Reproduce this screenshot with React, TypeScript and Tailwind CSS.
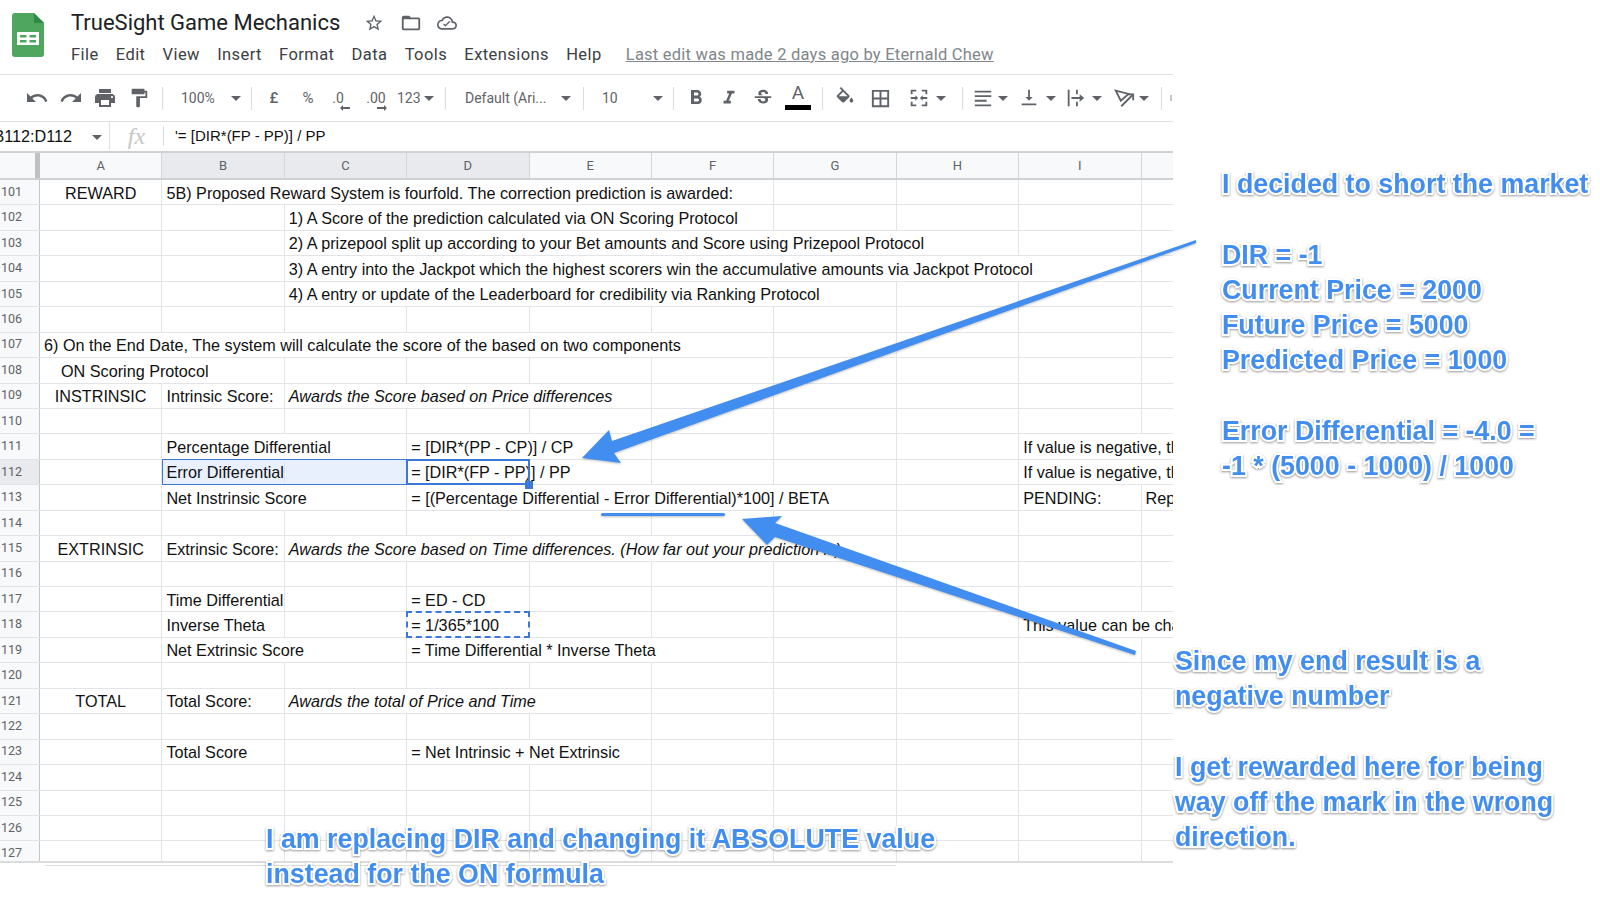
import React from "react";

const COL = 122.4;

type Cell = { col: number; span?: number; text: string; center?: boolean; italic?: boolean; pad?: string };

const rows: { n: number; cells: Cell[] }[] = [
  { n: 101, cells: [{ col: 0, text: "REWARD", center: true }, { col: 1, span: 5, text: "5B) Proposed Reward System is fourfold. The correction prediction is awarded:" }] },
  { n: 102, cells: [{ col: 2, span: 4, text: "1) A Score of the prediction calculated via ON Scoring Protocol" }] },
  { n: 103, cells: [{ col: 2, span: 6, text: "2) A prizepool split up according to your Bet amounts and Score using Prizepool Protocol" }] },
  { n: 104, cells: [{ col: 2, span: 7, text: "3) A entry into the Jackpot which the highest scorers win the accumulative amounts via Jackpot Protocol" }] },
  { n: 105, cells: [{ col: 2, span: 5, text: "4) A entry or update of the Leaderboard for credibility via Ranking Protocol" }] },
  { n: 106, cells: [] },
  { n: 107, cells: [{ col: 0, span: 6, text: "6) On the End Date, The system will calculate the score of the based on two components" }] },
  { n: 108, cells: [{ col: 0, span: 2, text: "ON Scoring Protocol", pad: "pl-[21px]" }] },
  { n: 109, cells: [{ col: 0, text: "INSTRINSIC", center: true }, { col: 1, text: "Intrinsic Score:" }, { col: 2, span: 3, text: "Awards the Score based on Price differences", italic: true }] },
  { n: 110, cells: [] },
  { n: 111, cells: [{ col: 1, span: 2, text: "Percentage Differential" }, { col: 3, span: 2, text: "= [DIR*(PP - CP)] / CP" }, { col: 8, span: 2, text: "If value is negative, then the" }] },
  { n: 112, cells: [{ col: 1, text: "Error Differential" }, { col: 2, text: "" }, { col: 3, span: 2, text: "= [DIR*(FP - PP)] / PP" }, { col: 8, span: 2, text: "If value is negative, then the" }] },
  { n: 113, cells: [{ col: 1, span: 2, text: "Net Instrinsic Score" }, { col: 3, span: 4, text: "= [(Percentage Differential - Error Differential)*100] / BETA" }, { col: 8, text: "PENDING:" }, { col: 9, text: "Replace" }] },
  { n: 114, cells: [] },
  { n: 115, cells: [{ col: 0, text: "EXTRINSIC", center: true }, { col: 1, text: "Extrinsic Score:" }, { col: 2, span: 5, text: "Awards the Score based on Time differences. (How far out your prediction is)", italic: true }] },
  { n: 116, cells: [] },
  { n: 117, cells: [{ col: 1, text: "Time Differential" }, { col: 3, text: "= ED - CD" }] },
  { n: 118, cells: [{ col: 1, text: "Inverse Theta" }, { col: 3, text: "= 1/365*100" }, { col: 8, span: 2, text: "This value can be changed" }] },
  { n: 119, cells: [{ col: 1, span: 2, text: "Net Extrinsic Score" }, { col: 3, span: 3, text: "= Time Differential * Inverse Theta" }] },
  { n: 120, cells: [] },
  { n: 121, cells: [{ col: 0, text: "TOTAL", center: true }, { col: 1, text: "Total Score:" }, { col: 2, span: 3, text: "Awards the total of Price and Time", italic: true }] },
  { n: 122, cells: [] },
  { n: 123, cells: [{ col: 1, text: "Total Score" }, { col: 3, span: 2, text: "= Net Intrinsic + Net Extrinsic" }] },
  { n: 124, cells: [] },
  { n: 125, cells: [] },
  { n: 126, cells: [] },
  { n: 127, cells: [] },
];

const Mi = ({ d, className = "" }: { d: string; className?: string }) => (
  <svg viewBox="0 0 24 24" className={`fill-[#5f6368] ${className}`}>
    <path d={d} />
  </svg>
);

const Caret = () => (
  <svg viewBox="0 0 10 5" className="w-[10px] h-[5px] fill-[#5f6368] shrink-0">
    <path d="M0 0h10L5 5z" />
  </svg>
);

const Sep = () => (
  <div className="w-3 flex justify-center shrink-0">
    <div className="w-px h-[23px] bg-[#dadce0]" />
  </div>
);

const Slot = ({ w, children }: { w: string; children: React.ReactNode }) => (
  <div className={`${w} h-full flex items-center justify-center shrink-0`}>{children}</div>
);

const icons = {
  undo: "M12.5 8c-2.65 0-5.05.99-6.9 2.6L2 7v9h9l-3.62-3.62c1.39-1.16 3.16-1.88 5.12-1.88 3.54 0 6.55 2.31 7.6 5.5l2.37-.78C21.08 11.03 17.15 8 12.5 8z",
  redo: "M18.4 10.6C16.55 8.99 14.15 8 11.5 8c-4.65 0-8.58 3.03-9.96 7.22L3.9 16c1.05-3.19 4.05-5.5 7.6-5.5 1.95 0 3.73.72 5.12 1.88L13 16h9V7l-3.6 3.6z",
  print: "M19 8H5c-1.66 0-3 1.34-3 3v6h4v4h12v-4h4v-6c0-1.66-1.34-3-3-3zm-3 11H8v-5h8v5zm3-7c-.55 0-1-.45-1-1s.45-1 1-1 1 .45 1 1-.45 1-1 1zm-1-9H6v4h12V3z",
  paint: "M18 4V3c0-.55-.45-1-1-1H5c-.55 0-1 .45-1 1v4c0 .55.45 1 1 1h12c.55 0 1-.45 1-1V6h1v4H9v11c0 .55.45 1 1 1h2c.55 0 1-.45 1-1v-9h8V4h-3z",
  bold: "M15.6 10.79c.97-.67 1.65-1.77 1.65-2.79 0-2.26-1.75-4-4-4H7v14h7.04c2.09 0 3.71-1.7 3.71-3.79 0-1.52-.86-2.82-2.15-3.42zM10 6.5h3c.83 0 1.5.67 1.5 1.5s-.67 1.5-1.5 1.5h-3v-3zm3.5 9H10v-3h3.5c.83 0 1.5.67 1.5 1.5s-.67 1.5-1.5 1.5z",
  italic: "M10 4v3h2.21l-3.42 8H6v3h8v-3h-2.21l3.42-8H18V4z",
  strike: "M6.85 7.08C6.85 4.37 9.45 3 12.24 3c1.64 0 3 .49 3.9 1.28.77.65 1.46 1.73 1.46 3.24h-3.01c0-.31-.05-.59-.15-.85-.29-.86-1.2-1.28-2.25-1.28-1.86 0-2.34 1.02-2.34 1.7 0 .48.25.88.74 1.21.38.25.77.48 1.41.7H7.39c-.21-.34-.54-.89-.54-1.92zM21 12v-2H3v2h9.62c1.15.45 1.96.75 1.96 1.97 0 1-.81 1.67-2.28 1.67-1.54 0-2.93-.54-2.93-2.51H6.4c0 .55.08 1.13.24 1.58.81 2.29 3.29 3.3 5.67 3.3 2.27 0 5.3-.89 5.3-4.05 0-.3-.01-1.16-.48-1.94H21V12z",
  fill: "M16.56 8.94L7.62 0 6.21 1.41l2.38 2.38-5.15 5.15c-.59.59-.59 1.54 0 2.12l5.5 5.5c.29.29.68.44 1.06.44s.77-.15 1.06-.44l5.5-5.5c.59-.58.59-1.53 0-2.12zM5.21 10L10 5.21 14.79 10H5.21zM19 11.5s-2 2.17-2 3.5c0 1.1.9 2 2 2s2-.9 2-2c0-1.33-2-3.5-2-3.5z",
  borders: "M3 3v18h18V3H3zm8 16H5v-6h6v6zm0-8H5V5h6v6zm8 8h-6v-6h6v6zm0-8h-6V5h6v6z",
  merge: "M3 3h6v2H5v3H3zM15 3h6v5h-2V5h-4zM3 16h2v3h4v2H3zM19 16h2v5h-6v-2h4zM3 11h5V9l3 3-3 3v-2H3zM21 13h-5v2l-3-3 3-3v2h5z",
  align: "M3 4h18v2H3zM3 9h18v2H3zM3 14h13v2H3zM3 19h18v2H3z",
  valign: "M16 11h-3V3h-2v8H8l4 4 4-4zM4 18v2h16v-2H4z",
  wrap: "M3 3h2v18H3zM12 3h2v5h-2zM12 16h2v5h-2zM7 11h9V8l5 4-5 4v-3H7z",
  star: "M22 9.24l-7.19-.62L12 2 9.19 8.63 2 9.24l5.46 4.73L5.82 21 12 17.27 18.18 21l-1.63-7.03L22 9.24zM12 15.4l-3.76 2.27 1-4.28-3.32-2.88 4.38-.38L12 6.1l1.71 4.04 4.38.38-3.32 2.88 1 4.28L12 15.4z",
  folder: "M20 6h-8l-2-2H4c-1.1 0-1.99.9-1.99 2L2 18c0 1.1.9 2 2 2h16c1.1 0 2-.9 2-2V8c0-1.1-.9-2-2-2zm0 12H4V8h16v10z",
  cloud: "M19.35 10.04C18.67 6.59 15.64 4 12 4 9.11 4 6.6 5.64 5.35 8.04 2.34 8.36 0 10.91 0 14c0 3.31 2.69 6 6 6h13c2.76 0 5-2.24 5-5 0-2.64-2.05-4.78-4.65-4.96zM19 18H6c-2.21 0-4-1.79-4-4s1.79-4 4-4h.71C7.37 7.69 9.48 6 12 6c3.04 0 5.5 2.46 5.5 5.5v.5H19c1.66 0 3 1.34 3 3s-1.34 3-3 3zM10 14.200 8.300 12.500 7.200 13.600 10 16.400 16 10.400 14.900 9.300z",
};

const RotateIcon = () => (
  <svg viewBox="0 0 24 24" className="w-[22px] h-[22px] fill-none stroke-[#5f6368] stroke-2">
    <path d="M3 4l14 3.500L8.500 15z" />
    <path d="M9 21L21 9" />
    <path d="M15.500 8H22v6.500" />
  </svg>
);

const SheetsLogo = () => (
  <svg viewBox="0 0 32 44" className="w-8 h-11">
    <path d="M3 0h19l10 10v31a3 3 0 0 1-3 3H3a3 3 0 0 1-3-3V3a3 3 0 0 1 3-3z" fill="#4fa75f" />
    <path d="M22 0l10 10H22z" fill="#2f8a47" />
    <path d="M5 19h22v13H5z" fill="#fff" />
    <path d="M8 22h6.500v2.500H8zM17.500 22H24v2.500h-6.500zM8 27h6.500v2.500H8zM17.500 27H24v2.500h-6.500z" fill="#4fa75f" />
  </svg>
);

const TopBar = () => (
  <div className="h-[75px] flex border-b border-[#e0e0e0] font-['Roboto',sans-serif] shrink-0">
    <div className="w-[71px] pl-3 pt-[13px] shrink-0">
      <SheetsLogo />
    </div>
    <div className="flex flex-col">
      <div className="h-[24px] mt-[11px] flex items-center">
        <span className="text-[22px] text-[#202124] leading-none">TrueSight Game Mechanics</span>
        <Mi d={icons.star} className="w-[20px] h-[20px] ml-[24px]" />
        <Mi d={icons.folder} className="w-[22px] h-[22px] ml-[16px]" />
        <Mi d={icons.cloud} className="w-[20px] h-[20px] ml-[15px]" />
      </div>
      <div className="mt-[9px] flex items-center gap-[17.200px] text-[16.500px] tracking-[0.42px] text-[#3c4043] leading-[22px]">
        <span>File</span>
        <span>Edit</span>
        <span>View</span>
        <span>Insert</span>
        <span>Format</span>
        <span>Data</span>
        <span>Tools</span>
        <span>Extensions</span>
        <span>Help</span>
        <span className="ml-[7px] underline tracking-[0.23px] text-[#80868b]">Last edit was made 2 days ago by Eternald Chew</span>
      </div>
    </div>
  </div>
);

const Toolbar = () => (
  <div className="h-[47px] pl-5 flex items-center border-b border-[#e0e0e0] text-[14px] text-[#5f6368] font-['Roboto',sans-serif] shrink-0">
    <Slot w="w-[34px]"><Mi d={icons.undo} className="w-[24px] h-[24px]" /></Slot>
    <Slot w="w-[34px]"><Mi d={icons.redo} className="w-[24px] h-[24px]" /></Slot>
    <Slot w="w-[34px]"><Mi d={icons.print} className="w-[24px] h-[24px]" /></Slot>
    <Slot w="w-[34px]"><Mi d={icons.paint} className="w-[22px] h-[22px]" /></Slot>
    <Sep />
    <div className="w-[77px] pl-[13px] pr-[4px] flex items-center justify-between shrink-0">
      <span>100%</span>
      <Caret />
    </div>
    <Sep />
    <Slot w="w-[34px]"><span className="text-[15px] font-medium">£</span></Slot>
    <Slot w="w-[34px]"><span className="text-[15px]">%</span></Slot>
    <Slot w="w-[34px]">
      <span className="relative text-[14px] mr-[8px]">.0
        <svg viewBox="0 0 10 6" className="absolute left-[8px] top-[17px] w-[10px] h-[6px] fill-[#5f6368]"><path d="M0 3l3-3v2h7v2H3v2z" /></svg>
      </span>
    </Slot>
    <Slot w="w-[34px]">
      <span className="relative text-[14px]">.00
        <svg viewBox="0 0 10 6" className="absolute left-[11px] top-[17px] w-[10px] h-[6px] fill-[#5f6368]"><path d="M10 3L7 0v2H0v2h7v2z" /></svg>
      </span>
    </Slot>
    <div className="w-[46px] pl-1 flex items-center gap-[3px] shrink-0">
      <span>123</span>
      <Caret />
    </div>
    <Sep />
    <div className="w-[126px] pl-[14px] pr-[6px] flex items-center justify-between shrink-0">
      <span>Default (Ari...</span>
      <Caret />
    </div>
    <Sep />
    <div className="w-[78px] pl-[13px] pr-[4px] flex items-center justify-between shrink-0">
      <span>10</span>
      <Caret />
    </div>
    <Sep />
    <Slot w="w-[33px]"><Mi d={icons.bold} className="w-[24px] h-[24px]" /></Slot>
    <Slot w="w-[34px]"><Mi d={icons.italic} className="w-[22px] h-[22px]" /></Slot>
    <Slot w="w-[34px]"><Mi d={icons.strike} className="w-[22px] h-[22px]" /></Slot>
    <div className="w-[36px] flex flex-col items-center shrink-0">
      <span className="text-[19px] leading-[20px] mt-[-3px]">A</span>
      <div className="w-[26px] h-[5px] bg-black mt-[2px]" />
    </div>
    <Sep />
    <Slot w="w-[34px]"><Mi d={icons.fill} className="w-[22px] h-[22px]" /></Slot>
    <Slot w="w-[37px]"><Mi d={icons.borders} className="w-[23px] h-[23px]" /></Slot>
    <div className="w-[57px] pl-[9px] flex items-center gap-[6px] shrink-0">
      <Mi d={icons.merge} className="w-[22px] h-[22px]" />
      <Caret />
    </div>
    <Sep />
    <div className="w-[49px] pl-[4px] flex items-center gap-[4px] shrink-0">
      <Mi d={icons.align} className="w-[22px] h-[22px]" />
      <Caret />
    </div>
    <div className="w-[46px] pl-[1px] flex items-center gap-[6px] shrink-0">
      <Mi d={icons.valign} className="w-[22px] h-[22px]" />
      <Caret />
    </div>
    <div className="w-[47px] pl-[2px] flex items-center gap-[5px] shrink-0">
      <Mi d={icons.wrap} className="w-[22px] h-[22px]" />
      <Caret />
    </div>
    <div className="w-[45px] pl-[3px] flex items-center gap-[4px] shrink-0">
      <RotateIcon />
      <Caret />
    </div>
    <Sep />
    <div className="ml-[3px] w-[2px] h-[6px] bg-[#c4c7c5] shrink-0" />
  </div>
);

const FormulaBar = () => (
  <div className="h-[29px] pb-px flex items-center text-[#111] font-['Liberation_Sans',sans-serif] shrink-0">
    <div className="w-[110px] h-full flex items-center justify-end pr-[37px] overflow-hidden border-r border-[#e0e0e0] shrink-0 relative text-[16.200px]">
      <span className="whitespace-nowrap">B112:D112</span>
      <div className="absolute left-[92px] top-[13px]"><Caret /></div>
    </div>
    <div className="w-[53px] flex justify-center shrink-0">
      <span className="font-['Liberation_Serif',serif] italic text-[24px] leading-none text-[#c4c7c5]">fx</span>
    </div>
    <div className="w-px h-5 bg-[#dadce0] shrink-0" />
    <span className="ml-[11px] whitespace-nowrap text-[15px]">'= [DIR*(FP - PP)] / PP</span>
  </div>
);

const letters = ["A", "B", "C", "D", "E", "F", "G", "H", "I"];

const ColumnHeader = () => (
  <div className="h-[29px] flex border-t-2 border-b-2 border-[#d0d1d2] bg-[#f8f9fa] text-[13px] text-[#5f6368] font-['Roboto',sans-serif] shrink-0">
    <div className="w-[40px] border-r-[5px] border-[#c0c1c2] shrink-0" />
    {letters.map((l) => {
      const sel = l === "B" || l === "C" || l === "D";
      return (
        <div
          key={l}
          className={`w-[122.400px] flex items-center justify-center border-r border-[#d4d5d6] shrink-0 ${sel ? "bg-[#e8eaed]" : ""}`}
        >
          {l}
        </div>
      );
    })}
  </div>
);

const Row = ({ n, cells }: { n: number; cells: Cell[] }) => {
  const out: React.ReactNode[] = [];
  let col = 0;
  while (col < 10) {
    const cell = cells.find((c) => c.col === col);
    const span = cell?.span ?? 1;
    const last = col + span >= 10;
    const selected = n === 112 && (col === 1 || col === 2);
    out.push(
      <div
        key={col}
        style={{ width: span * COL }}
        className={`h-full pt-px flex items-center shrink-0 whitespace-nowrap overflow-hidden border-[#e3e4e5] ${last ? "" : "border-r"} ${
          cell?.center ? "justify-center" : cell?.pad ?? "pl-1"
        } ${cell?.italic ? "italic" : ""} ${selected ? "bg-[#e8f0fe]" : ""}`}
      >
        {cell?.text}
      </div>
    );
    col += span;
  }
  return (
    <div className="h-[25.450px] flex border-b border-[#e3e4e5] relative shrink-0">
      <div
        className={`w-[40px] pl-px flex items-center text-[12.500px] text-[#5f6368] border-r border-[#c4c5c6] font-['Roboto',sans-serif] shrink-0 ${
          n === 112 ? "bg-[#e8eaed]" : "bg-[#f8f9fa]"
        }`}
      >
        {n}
      </div>
      {out}
      {n === 112 && (
        <>
          {/* selected range with the active cell and its handle */}
          <div className="absolute left-[162px] top-[-1px] w-[368px] h-[26.400px] border border-[#3c78d8]" />
          <div className="absolute left-[406px] top-[-1px] w-[124px] h-[26.400px] border-2 border-[#3c78d8]" />
          <div className="absolute z-10 left-[525px] top-[21px] w-2 h-2 bg-[#3c78d8]" />
        </>
      )}
      {n === 118 && (
        <div className="absolute left-[406px] top-[-1px] w-[124px] h-[26.400px] border-2 border-dashed border-[#3c78d8]" />
      )}
    </div>
  );
};

const Arrows = () => (
  <svg viewBox="0 0 1600 922" className="absolute inset-0 w-[1600px] h-[922px] pointer-events-none [filter:drop-shadow(0_1px_1px_rgba(0,0,0,0.25))]">
    <path d="M1196 240L612 441L609 430L582 458L621 463L614 453L1196 243z" fill="#428ef0" />
    <path d="M742 519L782 516L775 523L1136 651L1135 655L775 537L767 545z" fill="#428ef0" />
    <rect x="601" y="513" width="124" height="3" rx="1.500" fill="#428ef0" />
  </svg>
);

const noteText =
  "font-['Liberation_Sans',sans-serif] font-bold text-[26.800px] leading-[35.300px] text-[#428ef0] whitespace-nowrap [-webkit-text-stroke:4px_#fff] [paint-order:stroke_fill] [filter:drop-shadow(0_1px_1px_rgba(0,0,0,0.4))]";

export default function App() {
  return (
    <div className="w-[1600px] h-[922px] bg-white relative overflow-hidden">
      <div className="w-[1173px] flex flex-col overflow-hidden">
        <TopBar />
        <Toolbar />
        <FormulaBar />
        <ColumnHeader />
        <div className="h-[683px] overflow-hidden border-b-2 border-[#dcdcdc] text-[16.200px] text-[#111] font-['Liberation_Sans',sans-serif] shrink-0">
          {rows.map((r) => (
            <Row key={r.n} n={r.n} cells={r.cells} />
          ))}
        </div>
        <div className="ml-[45px] mt-[2px] w-[851px] h-px bg-[#e0e0e0]" />
      </div>

      <Arrows />

      <div className={`absolute left-[1222px] top-[167px] ${noteText}`}>
        I decided to short the market
        <br />
        <br />
        DIR = -1
        <br />
        Current Price = 2000
        <br />
        Future Price = 5000
        <br />
        Predicted Price = 1000
        <br />
        <br />
        Error Differential = -4.0 =
        <br />
        -1 * (5000 - 1000) / 1000
      </div>
      <div className={`absolute left-[1175px] top-[644px] ${noteText}`}>
        Since my end result is a
        <br />
        negative number
        <br />
        <br />
        I get rewarded here for being
        <br />
        way off the mark in the wrong
        <br />
        direction.
      </div>
      <div className={`absolute left-[266px] top-[822px] ${noteText}`}>
        I am replacing DIR and changing it ABSOLUTE value
        <br />
        instead for the ON formula
      </div>
    </div>
  );
}
